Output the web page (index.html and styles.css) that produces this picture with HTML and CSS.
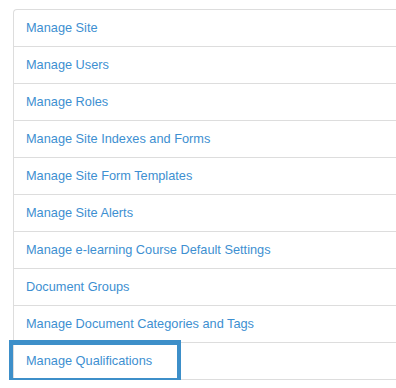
FILE: index.html
```html
<!DOCTYPE html>
<html lang="en">
<head>
    <meta charset="UTF-8">
    <meta name="viewport" content="width=device-width, initial-scale=1.0">
    <title>Site Administration</title>
    <link rel="stylesheet" href="styles.css">
</head>
<body>
    <div class="admin-list">
        <a class="admin-item" href="#">Manage Site</a>
        <a class="admin-item" href="#">Manage Users</a>
        <a class="admin-item" href="#">Manage Roles</a>
        <a class="admin-item" href="#">Manage Site Indexes and Forms</a>
        <a class="admin-item" href="#">Manage Site Form Templates</a>
        <a class="admin-item" href="#">Manage Site Alerts</a>
        <a class="admin-item" href="#">Manage e-learning Course Default Settings</a>
        <a class="admin-item" href="#">Document Groups</a>
        <a class="admin-item" href="#">Manage Document Categories and Tags</a>
        <a class="admin-item highlighted" href="#">Manage Qualifications</a>
    </div>
</body>
</html>
```

FILE: styles.css
```css
html, body {
    margin: 0;
}
body {
    font-family: "Liberation Sans", Arial, sans-serif;
    font-size: 12.75px;
    background-color: #fff;
    padding: 9px 0 0 13px;
}
.admin-list {
    display: flex;
    flex-direction: column;
    width: 383px;
    border: 1px solid #ddd;
    border-right: none;
    border-radius: 4px 0 0 0;
}
.admin-item {
    display: block;
    position: relative;
    height: 36px;
    line-height: 36px;
    padding-left: 12px;
    color: #3d8fd1;
    text-decoration: none;
    border-bottom: 1px solid #ddd;
}
.admin-item:last-child {
    border-bottom: none;
}
.highlighted::after {
    content: "";
    position: absolute;
    left: -5px;
    top: -3px;
    width: 164px;
    height: 33px;
    border: 4px solid #3d8fc9;
    border-top-width: 5px;
    border-bottom-width: 5px;
}
```
